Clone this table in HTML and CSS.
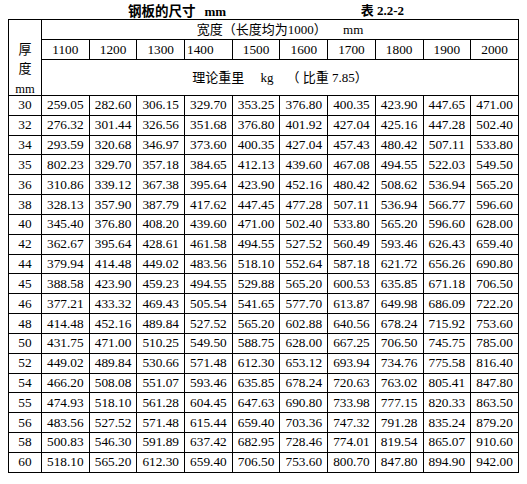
FILE: index.html
```html
<!DOCTYPE html>
<html lang="zh">
<head>
<meta charset="utf-8">
<title>钢板的尺寸</title>
<link rel="stylesheet" href="styles.css">
</head>
<body>
<div class="page">
  <div class="caption">
    <span class="cap-title">钢板的尺寸<span class="unit">mm</span></span>
    <span class="cap-no">表 2.2-2</span>
  </div>
  <table class="grid">
    <colgroup>
      <col class="c-thk">
      <col span="10" class="c-w">
    </colgroup>
    <thead>
      <tr class="h1">
        <th rowspan="3" class="thk"><span class="thk-in">厚<br>度<br><span class="mm">mm</span></span></th>
        <th colspan="10" class="wide">宽度（长度均为1000）     mm</th>
      </tr>
      <tr class="h2">
        <th>1100</th><th>1200</th><th>1300</th><th class="l">1400</th><th>1500</th><th>1600</th><th>1700</th><th>1800</th><th>1900</th><th>2000</th>
      </tr>
      <tr class="h3">
        <th colspan="10" class="wide">理论重里     kg    （ 比重 7.85）</th>
      </tr>
    </thead>
    <tbody>
      <tr><td>30</td><td>259.05</td><td>282.60</td><td>306.15</td><td>329.70</td><td>353.25</td><td>376.80</td><td>400.35</td><td>423.90</td><td>447.65</td><td>471.00</td></tr>
      <tr><td>32</td><td>276.32</td><td>301.44</td><td>326.56</td><td>351.68</td><td>376.80</td><td>401.92</td><td>427.04</td><td>425.16</td><td>447.28</td><td>502.40</td></tr>
      <tr><td>34</td><td>293.59</td><td>320.68</td><td>346.97</td><td>373.60</td><td>400.35</td><td>427.04</td><td>457.43</td><td>480.42</td><td>507.11</td><td>533.80</td></tr>
      <tr><td>35</td><td>802.23</td><td>329.70</td><td>357.18</td><td>384.65</td><td>412.13</td><td>439.60</td><td>467.08</td><td>494.55</td><td>522.03</td><td>549.50</td></tr>
      <tr><td>36</td><td>310.86</td><td>339.12</td><td>367.38</td><td>395.64</td><td>423.90</td><td>452.16</td><td>480.42</td><td>508.62</td><td>536.94</td><td>565.20</td></tr>
      <tr><td>38</td><td>328.13</td><td>357.90</td><td>387.79</td><td>417.62</td><td>447.45</td><td>477.28</td><td>507.11</td><td>536.94</td><td>566.77</td><td>596.60</td></tr>
      <tr><td>40</td><td>345.40</td><td>376.80</td><td>408.20</td><td>439.60</td><td>471.00</td><td>502.40</td><td>533.80</td><td>565.20</td><td>596.60</td><td>628.00</td></tr>
      <tr><td>42</td><td>362.67</td><td>395.64</td><td>428.61</td><td>461.58</td><td>494.55</td><td>527.52</td><td>560.49</td><td>593.46</td><td>626.43</td><td>659.40</td></tr>
      <tr><td>44</td><td>379.94</td><td>414.48</td><td>449.02</td><td>483.56</td><td>518.10</td><td>552.64</td><td>587.18</td><td>621.72</td><td>656.26</td><td>690.80</td></tr>
      <tr><td>45</td><td>388.58</td><td>423.90</td><td>459.23</td><td>494.55</td><td>529.88</td><td>565.20</td><td>600.53</td><td>635.85</td><td>671.18</td><td>706.50</td></tr>
      <tr><td>46</td><td>377.21</td><td>433.32</td><td>469.43</td><td>505.54</td><td>541.65</td><td>577.70</td><td>613.87</td><td>649.98</td><td>686.09</td><td>722.20</td></tr>
      <tr><td>48</td><td>414.48</td><td>452.16</td><td>489.84</td><td>527.52</td><td>565.20</td><td>602.88</td><td>640.56</td><td>678.24</td><td>715.92</td><td>753.60</td></tr>
      <tr><td>50</td><td>431.75</td><td>471.00</td><td>510.25</td><td>549.50</td><td>588.75</td><td>628.00</td><td>667.25</td><td>706.50</td><td>745.75</td><td>785.00</td></tr>
      <tr><td>52</td><td>449.02</td><td>489.84</td><td>530.66</td><td>571.48</td><td>612.30</td><td>653.12</td><td>693.94</td><td>734.76</td><td>775.58</td><td>816.40</td></tr>
      <tr><td>54</td><td>466.20</td><td>508.08</td><td>551.07</td><td>593.46</td><td>635.85</td><td>678.24</td><td>720.63</td><td>763.02</td><td>805.41</td><td>847.80</td></tr>
      <tr><td>55</td><td>474.93</td><td>518.10</td><td>561.28</td><td>604.45</td><td>647.63</td><td>690.80</td><td>733.98</td><td>777.15</td><td>820.33</td><td>863.50</td></tr>
      <tr><td>56</td><td>483.56</td><td>527.52</td><td>571.48</td><td>615.44</td><td>659.40</td><td>703.36</td><td>747.32</td><td>791.28</td><td>835.24</td><td>879.20</td></tr>
      <tr><td>58</td><td>500.83</td><td>546.30</td><td>591.89</td><td>637.42</td><td>682.95</td><td>728.46</td><td>774.01</td><td>819.54</td><td>865.07</td><td>910.60</td></tr>
      <tr><td>60</td><td>518.10</td><td>565.20</td><td>612.30</td><td>659.40</td><td>706.50</td><td>753.60</td><td>800.70</td><td>847.80</td><td>894.90</td><td>942.00</td></tr>
    </tbody>
  </table>
</div>
</body>
</html>
```
FILE: styles.css
```css
html, body {
  margin: 0;
  padding: 0;
  background: #fff;
}

.page {
  padding: 0 0 0 8px;
  font-family: "Liberation Serif", "Noto Sans CJK SC", serif;
  color: #000;
}

.caption {
  width: 510px;
  height: 19px;
  display: flex;
  justify-content: space-between;
  align-items: center;
  box-sizing: border-box;
  padding: 0 114px 0 120px;
  font-weight: bold;
  font-size: 13px;
}

.cap-title {
  font-size: 13.5px;
}

.cap-title .unit {
  margin-left: 9px;
  font-size: 13px;
}

.grid {
  border-collapse: collapse;
  table-layout: fixed;
  width: 510px;
  font-size: 13.3px;
}

.c-thk { width: 33px; }
.c-w { width: 47.7px; }

.grid th,
.grid td {
  border: 1px solid #000;
  padding: 0;
  text-align: center;
  vertical-align: middle;
  font-weight: normal;
  line-height: 16px;
  white-space: nowrap;
}

.grid th.l {
  text-align: left;
  padding-left: 2px;
}

.grid .wide {
  white-space: pre;
  font-size: 13px;
}

.h1 { height: 20px; }
.h2 { height: 20px; }
.h3 { height: 36px; }

.grid th.thk {
  line-height: 19.5px;
  font-size: 13px;
  white-space: normal;
}

.thk-in {
  display: block;
  margin-top: 12px;
  margin-bottom: -12px;
}

.thk .mm {
  font-size: 12.5px;
}

.grid tbody tr {
  height: 19.84px;
}
```
